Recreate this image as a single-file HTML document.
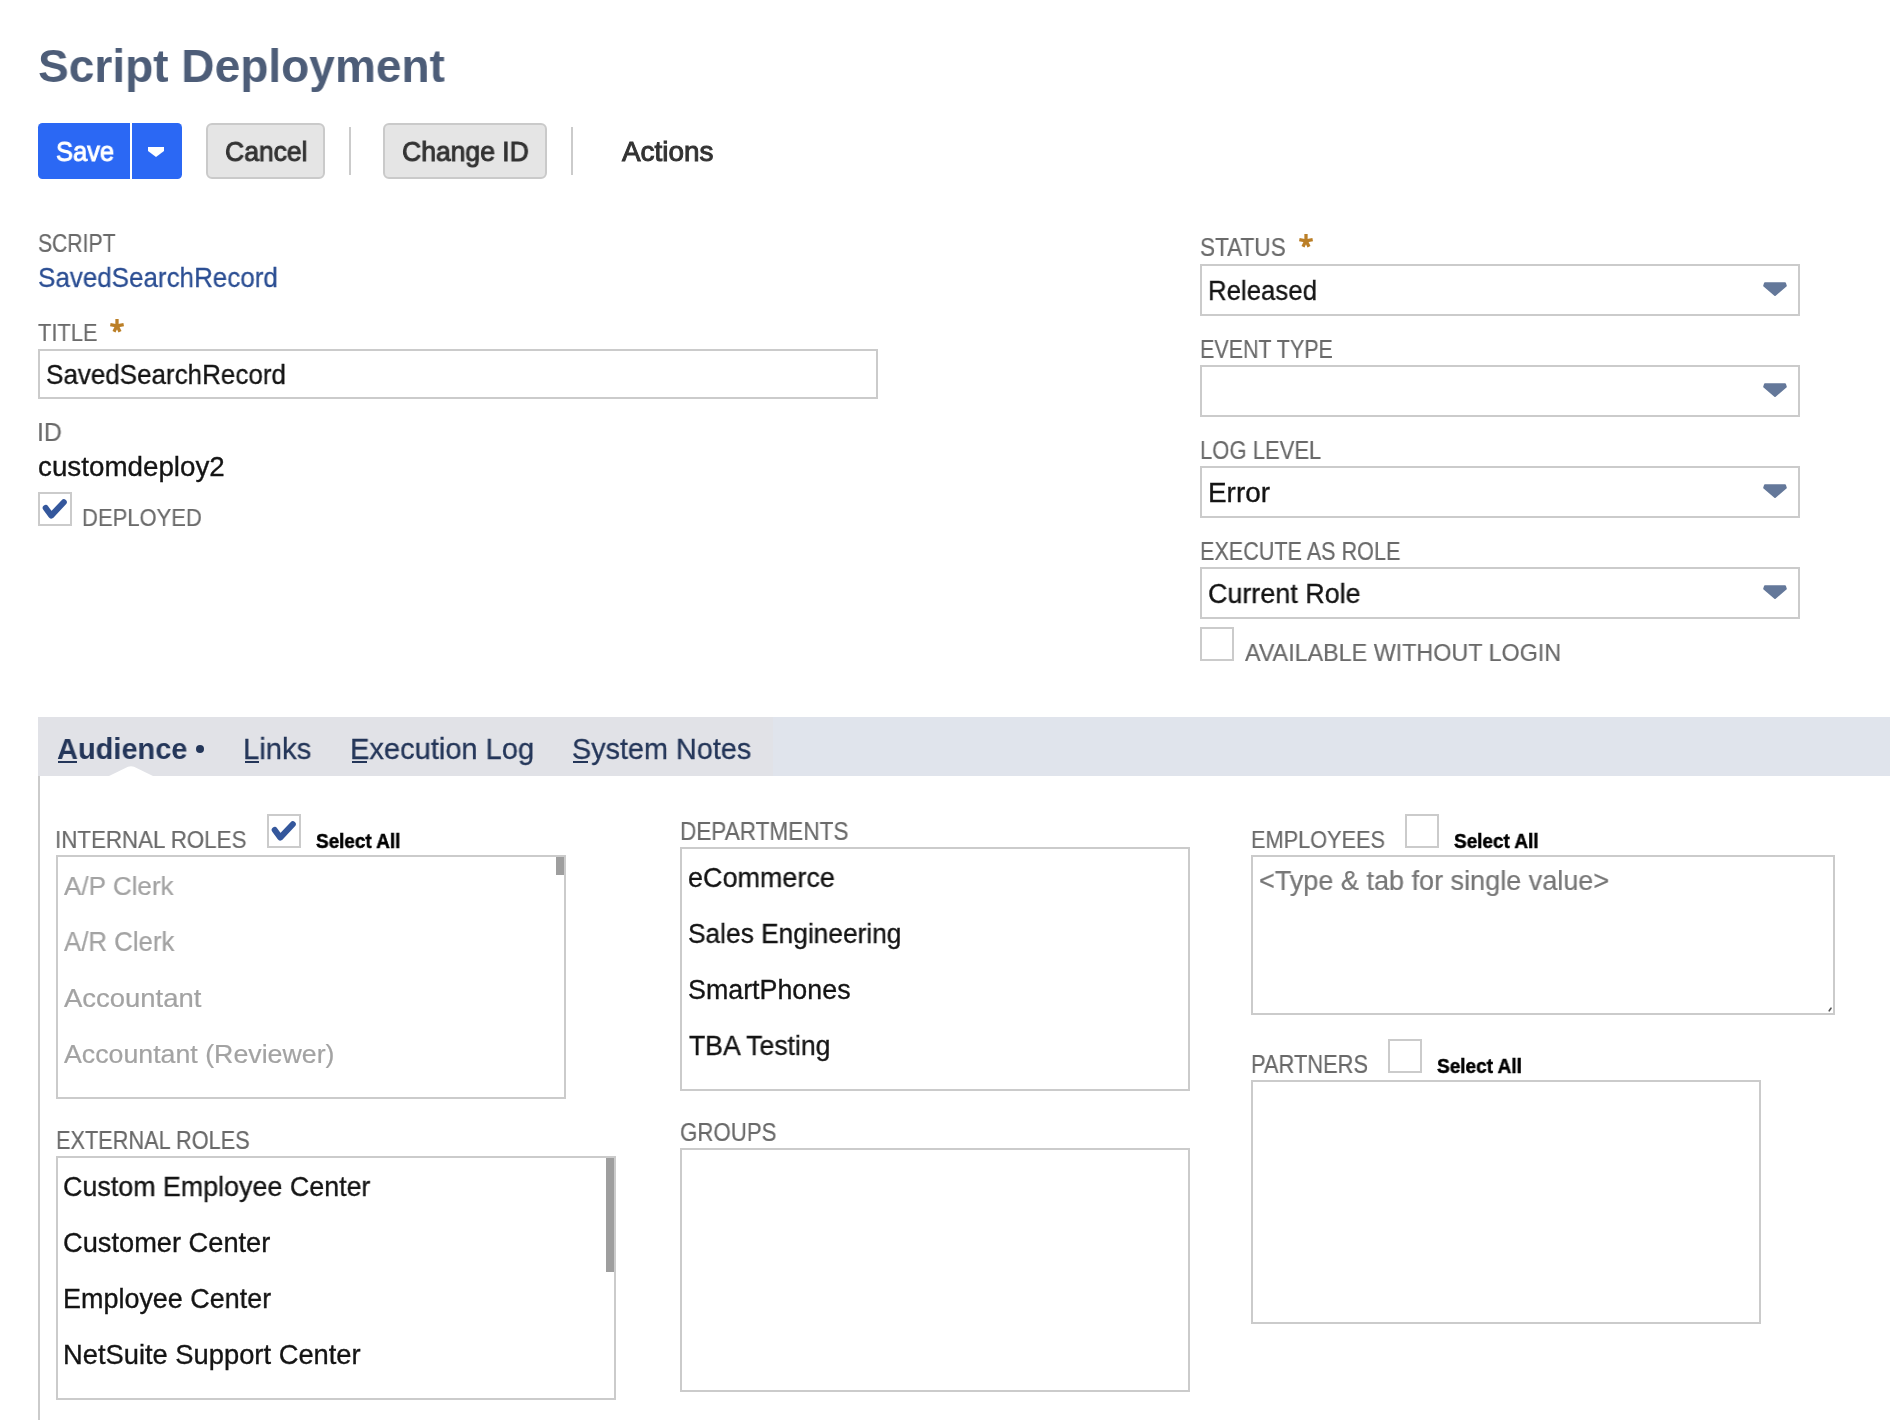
<!DOCTYPE html>
<html><head><meta charset="utf-8"><title>Script Deployment</title>
<style>
html,body{margin:0;padding:0;background:#fff;width:1890px;height:1420px;overflow:hidden;position:relative;font-family:"Liberation Sans",sans-serif}
.t{position:absolute;line-height:0;white-space:pre;transform-origin:0 0;will-change:transform}
.b{position:absolute;box-sizing:border-box}
.box{position:absolute;box-sizing:border-box;border:2px solid #cbcbcb;background:#fff}
.cb{position:absolute;box-sizing:border-box;border:2px solid #cbcbcb;background:#fff;width:34px;height:34px}
.sep{position:absolute;width:2px;background:#cbcbcb}
.arr{position:absolute;width:24px;height:15px}
</style></head><body>
<!-- buttons -->
<div class="b" style="left:38px;top:123px;width:144px;height:56px;background:#2b68f4;border-radius:4.5px"></div>
<div class="b" style="left:130px;top:123px;width:2px;height:56px;background:#fff"></div>
<svg class="b" style="left:147px;top:146px" width="18" height="12" viewBox="0 0 18 12"><path d="M1 1 H17 V5 L9 11 L1 5 Z" fill="#fff"/></svg>
<div class="b" style="left:206px;top:123px;width:119px;height:56px;background:#e5e5e5;border:2px solid #cacaca;border-radius:6px"></div>
<div class="sep" style="left:349px;top:127px;height:48px"></div>
<div class="b" style="left:383px;top:123px;width:164px;height:56px;background:#e5e5e5;border:2px solid #cacaca;border-radius:6px"></div>
<div class="sep" style="left:571px;top:127px;height:48px"></div>

<!-- asterisks -->
<svg class="b" style="left:109px;top:318px" width="16" height="16" viewBox="0 0 16 16"><g stroke="#bb7f27" stroke-width="3.3" stroke-linecap="butt"><line x1="8" y1="1" x2="8" y2="8"/><line x1="1.3" y1="6.6" x2="8" y2="7.8"/><line x1="14.7" y1="6.6" x2="8" y2="7.8"/><line x1="5" y1="13.8" x2="8" y2="7.5"/><line x1="11" y1="13.8" x2="8" y2="7.5"/></g></svg>
<svg class="b" style="left:1298px;top:233px" width="16" height="16" viewBox="0 0 16 16"><g stroke="#bb7f27" stroke-width="3.3" stroke-linecap="butt"><line x1="8" y1="1" x2="8" y2="8"/><line x1="1.3" y1="6.6" x2="8" y2="7.8"/><line x1="14.7" y1="6.6" x2="8" y2="7.8"/><line x1="5" y1="13.8" x2="8" y2="7.5"/><line x1="11" y1="13.8" x2="8" y2="7.5"/></g></svg>

<!-- title input -->
<div class="box" style="left:38px;top:349px;width:840px;height:50px"></div>
<!-- deployed checkbox -->
<div class="cb" style="left:38px;top:492px"></div>
<svg class="b" style="left:38px;top:492px" width="34" height="34" viewBox="0 0 34 34"><path d="M7.7 16 L13.2 23.6 L25.8 10.2" fill="none" stroke="#34579c" stroke-width="6" stroke-linejoin="round" stroke-linecap="round"/></svg>

<!-- selects -->
<div class="box" style="left:1200px;top:264px;width:600px;height:52px"></div>
<div class="box" style="left:1200px;top:365px;width:600px;height:52px"></div>
<div class="box" style="left:1200px;top:466px;width:600px;height:52px"></div>
<div class="box" style="left:1200px;top:567px;width:600px;height:52px"></div>
<svg class="arr" style="left:1763px;top:282px" viewBox="0 0 24 15"><path d="M2 1.2 H22 L22.8 3.8 L12 13 L1.2 3.8 Z" fill="#64789a" stroke="#64789a" stroke-width="2" stroke-linejoin="round"/></svg>
<svg class="arr" style="left:1763px;top:383px" viewBox="0 0 24 15"><path d="M2 1.2 H22 L22.8 3.8 L12 13 L1.2 3.8 Z" fill="#64789a" stroke="#64789a" stroke-width="2" stroke-linejoin="round"/></svg>
<svg class="arr" style="left:1763px;top:484px" viewBox="0 0 24 15"><path d="M2 1.2 H22 L22.8 3.8 L12 13 L1.2 3.8 Z" fill="#64789a" stroke="#64789a" stroke-width="2" stroke-linejoin="round"/></svg>
<svg class="arr" style="left:1763px;top:585px" viewBox="0 0 24 15"><path d="M2 1.2 H22 L22.8 3.8 L12 13 L1.2 3.8 Z" fill="#64789a" stroke="#64789a" stroke-width="2" stroke-linejoin="round"/></svg>
<div class="cb" style="left:1200px;top:627px"></div>

<!-- tab bar -->
<div class="b" style="left:38px;top:717px;width:1852px;height:59px;background:#e0e4ec"></div>
<div class="b" style="left:38px;top:717px;width:735px;height:59px;background:#e1e2e7"></div>
<svg class="b" style="left:106px;top:764px;filter:blur(0.5px)" width="50" height="13" viewBox="0 0 50 13"><path d="M2 12.5 L22 2.8 Q25 1.5 28 2.8 L48 12.5 Z" fill="#fff"/></svg>
<div class="b" style="left:38px;top:776px;width:2px;height:644px;background:#cbcbcb"></div>
<div class="b" style="left:58px;top:760.5px;width:19px;height:2.5px;background:#243659"></div>
<div class="b" style="left:244.5px;top:760.5px;width:14px;height:2.5px;background:#243659"></div>
<div class="b" style="left:351.5px;top:760.5px;width:15px;height:2.5px;background:#243659"></div>
<div class="b" style="left:573px;top:760.5px;width:15px;height:2.5px;background:#243659"></div>
<div class="b" style="left:196px;top:744.5px;width:8px;height:8px;border-radius:50%;background:#243659"></div>

<!-- internal roles -->
<div class="cb" style="left:267px;top:814px"></div>
<svg class="b" style="left:267px;top:814px" width="34" height="34" viewBox="0 0 34 34"><path d="M7.7 16 L13.2 23.6 L25.8 10.2" fill="none" stroke="#34579c" stroke-width="6" stroke-linejoin="round" stroke-linecap="round"/></svg>
<div class="box" style="left:56px;top:855px;width:510px;height:244px"></div>
<div class="b" style="left:556px;top:857px;width:8px;height:18px;background:#9e9e9e"></div>
<!-- external roles -->
<div class="box" style="left:56px;top:1156px;width:560px;height:244px"></div>
<div class="b" style="left:606px;top:1158px;width:8px;height:114px;background:#9e9e9e"></div>
<!-- departments / groups -->
<div class="box" style="left:680px;top:847px;width:510px;height:244px"></div>
<div class="box" style="left:680px;top:1148px;width:510px;height:244px"></div>
<!-- employees / partners -->
<div class="cb" style="left:1405px;top:814px"></div>
<div class="box" style="left:1251px;top:855px;width:584px;height:160px"></div>
<svg class="b" style="left:1825px;top:1004px" width="8" height="8" viewBox="0 0 8 8"><path d="M6 4.2 L4.2 6.8" stroke="#555" stroke-width="1.6" stroke-linecap="round"/></svg>
<div class="cb" style="left:1388px;top:1039px"></div>
<div class="box" style="left:1251px;top:1080px;width:510px;height:244px"></div>

<div class="t" style="left:38.12px;top:66px;font-size:46.81px;font-weight:700;color:#4d5d78;transform:scaleX(0.9843)">Script Deployment</div>
<div class="t" style="left:55.74px;top:152px;font-size:27.97px;font-weight:400;-webkit-text-stroke:0.035em #ffffff;color:#ffffff;transform:scaleX(0.9099)">Save</div>
<div class="t" style="left:224.90px;top:152px;font-size:27.54px;font-weight:400;-webkit-text-stroke:0.035em #333333;color:#333333;transform:scaleX(0.9624)">Cancel</div>
<div class="t" style="left:402.00px;top:152px;font-size:27.54px;font-weight:400;-webkit-text-stroke:0.035em #333333;color:#333333;transform:scaleX(0.9633)">Change ID</div>
<div class="t" style="left:621.96px;top:152px;font-size:27.54px;font-weight:400;-webkit-text-stroke:0.035em #333333;color:#333333;transform:scaleX(1.0131)">Actions</div>
<div class="t" style="left:38.05px;top:243px;font-size:24.93px;font-weight:400;-webkit-text-stroke:0.008em #6a6a6a;color:#6a6a6a;transform:scaleX(0.8490)">SCRIPT</div>
<div class="t" style="left:37.86px;top:278px;font-size:27.97px;font-weight:400;-webkit-text-stroke:0.01em #2b4e93;color:#2b4e93;transform:scaleX(0.9292)">SavedSearchRecord</div>
<div class="t" style="left:37.86px;top:333px;font-size:24.78px;font-weight:400;-webkit-text-stroke:0.008em #6a6a6a;color:#6a6a6a;transform:scaleX(0.8813)">TITLE</div>
<div class="t" style="left:45.86px;top:375px;font-size:27.97px;font-weight:400;-webkit-text-stroke:0.012em #141414;color:#141414;transform:scaleX(0.9296)">SavedSearchRecord</div>
<div class="t" style="left:37.16px;top:432px;font-size:25.65px;font-weight:400;-webkit-text-stroke:0.008em #6a6a6a;color:#6a6a6a;transform:scaleX(0.9723)">ID</div>
<div class="t" style="left:37.79px;top:467px;font-size:27.00px;font-weight:400;-webkit-text-stroke:0.012em #141414;color:#141414;transform:scaleX(1.0286)">customdeploy2</div>
<div class="t" style="left:82.14px;top:518px;font-size:24.78px;font-weight:400;-webkit-text-stroke:0.008em #6a6a6a;color:#6a6a6a;transform:scaleX(0.8882)">DEPLOYED</div>
<div class="t" style="left:1200.10px;top:247px;font-size:25.80px;font-weight:400;-webkit-text-stroke:0.008em #6a6a6a;color:#6a6a6a;transform:scaleX(0.8756)">STATUS</div>
<div class="t" style="left:1208.14px;top:290px;font-size:28.26px;font-weight:400;-webkit-text-stroke:0.012em #141414;color:#141414;transform:scaleX(0.9127)">Released</div>
<div class="t" style="left:1200.18px;top:349px;font-size:25.07px;font-weight:400;-webkit-text-stroke:0.008em #6a6a6a;color:#6a6a6a;transform:scaleX(0.8568)">EVENT TYPE</div>
<div class="t" style="left:1200.24px;top:450px;font-size:25.80px;font-weight:400;-webkit-text-stroke:0.008em #6a6a6a;color:#6a6a6a;transform:scaleX(0.8544)">LOG LEVEL</div>
<div class="t" style="left:1207.97px;top:493px;font-size:26.96px;font-weight:400;-webkit-text-stroke:0.012em #141414;color:#141414;transform:scaleX(1.0345)">Error</div>
<div class="t" style="left:1199.87px;top:551px;font-size:26.09px;font-weight:400;-webkit-text-stroke:0.008em #6a6a6a;color:#6a6a6a;transform:scaleX(0.8278)">EXECUTE AS ROLE</div>
<div class="t" style="left:1208.25px;top:594px;font-size:27.39px;font-weight:400;-webkit-text-stroke:0.012em #141414;color:#141414;transform:scaleX(0.9827)">Current Role</div>
<div class="t" style="left:1244.50px;top:653px;font-size:24.78px;font-weight:400;-webkit-text-stroke:0.008em #6a6a6a;color:#6a6a6a;transform:scaleX(0.9414)">AVAILABLE WITHOUT LOGIN</div>
<div class="t" style="left:57.43px;top:749px;font-size:30.00px;font-weight:700;color:#243659;transform:scaleX(0.9662)">Audience</div>
<div class="t" style="left:242.66px;top:749px;font-size:30.00px;font-weight:400;-webkit-text-stroke:0.01em #243659;color:#243659;transform:scaleX(0.9760)">Links</div>
<div class="t" style="left:349.58px;top:749px;font-size:30.00px;font-weight:400;-webkit-text-stroke:0.01em #243659;color:#243659;transform:scaleX(0.9683)">Execution Log</div>
<div class="t" style="left:572.25px;top:749px;font-size:30.00px;font-weight:400;-webkit-text-stroke:0.01em #243659;color:#243659;transform:scaleX(0.9599)">System Notes</div>
<div class="t" style="left:55.49px;top:840px;font-size:24.78px;font-weight:400;-webkit-text-stroke:0.008em #6a6a6a;color:#6a6a6a;transform:scaleX(0.9012)">INTERNAL ROLES</div>
<div class="t" style="left:315.81px;top:841px;font-size:19.71px;font-weight:700;-webkit-text-stroke:0.025em #000000;color:#000000;transform:scaleX(0.9594)">Select All</div>
<div class="t" style="left:64.00px;top:886px;font-size:26.67px;font-weight:400;-webkit-text-stroke:0.008em #a3a3a3;color:#a3a3a3;transform:scaleX(0.9771)">A/P Clerk</div>
<div class="t" style="left:64.30px;top:942px;font-size:27.25px;font-weight:400;-webkit-text-stroke:0.008em #a3a3a3;color:#a3a3a3;transform:scaleX(0.9459)">A/R Clerk</div>
<div class="t" style="left:64.30px;top:998px;font-size:26.67px;font-weight:400;-webkit-text-stroke:0.008em #a3a3a3;color:#a3a3a3;transform:scaleX(1.0298)">Accountant</div>
<div class="t" style="left:64.30px;top:1054px;font-size:26.50px;font-weight:400;-webkit-text-stroke:0.008em #a3a3a3;color:#a3a3a3;transform:scaleX(1.0090)">Accountant (Reviewer)</div>
<div class="t" style="left:55.66px;top:1140px;font-size:25.51px;font-weight:400;-webkit-text-stroke:0.008em #6a6a6a;color:#6a6a6a;transform:scaleX(0.8523)">EXTERNAL ROLES</div>
<div class="t" style="left:63.46px;top:1187px;font-size:26.96px;font-weight:400;-webkit-text-stroke:0.012em #141414;color:#141414;transform:scaleX(0.9960)">Custom Employee Center</div>
<div class="t" style="left:63.44px;top:1243px;font-size:26.96px;font-weight:400;-webkit-text-stroke:0.012em #141414;color:#141414;transform:scaleX(1.0102)">Customer Center</div>
<div class="t" style="left:62.64px;top:1299px;font-size:26.96px;font-weight:400;-webkit-text-stroke:0.012em #141414;color:#141414;transform:scaleX(0.9996)">Employee Center</div>
<div class="t" style="left:62.61px;top:1355px;font-size:26.96px;font-weight:400;-webkit-text-stroke:0.012em #141414;color:#141414;transform:scaleX(1.0136)">NetSuite Support Center</div>
<div class="t" style="left:679.80px;top:831px;font-size:24.93px;font-weight:400;-webkit-text-stroke:0.008em #6a6a6a;color:#6a6a6a;transform:scaleX(0.9051)">DEPARTMENTS</div>
<div class="t" style="left:688.12px;top:878px;font-size:27.10px;font-weight:400;-webkit-text-stroke:0.012em #141414;color:#141414;transform:scaleX(0.9950)">eCommerce</div>
<div class="t" style="left:688.15px;top:934px;font-size:26.81px;font-weight:400;-webkit-text-stroke:0.012em #141414;color:#141414;transform:scaleX(0.9813)">Sales Engineering</div>
<div class="t" style="left:688.13px;top:990px;font-size:26.81px;font-weight:400;-webkit-text-stroke:0.012em #141414;color:#141414;transform:scaleX(1.0012)">SmartPhones</div>
<div class="t" style="left:688.67px;top:1046px;font-size:26.81px;font-weight:400;-webkit-text-stroke:0.012em #141414;color:#141414;transform:scaleX(0.9929)">TBA Testing</div>
<div class="t" style="left:679.89px;top:1132px;font-size:25.65px;font-weight:400;-webkit-text-stroke:0.008em #6a6a6a;color:#6a6a6a;transform:scaleX(0.8679)">GROUPS</div>
<div class="t" style="left:1250.76px;top:840px;font-size:24.78px;font-weight:400;-webkit-text-stroke:0.008em #6a6a6a;color:#6a6a6a;transform:scaleX(0.8770)">EMPLOYEES</div>
<div class="t" style="left:1453.91px;top:841px;font-size:19.71px;font-weight:700;-webkit-text-stroke:0.025em #000000;color:#000000;transform:scaleX(0.9617)">Select All</div>
<div class="t" style="left:1258.75px;top:881px;font-size:27.68px;font-weight:400;-webkit-text-stroke:0.008em #777777;color:#777777;transform:scaleX(0.9770)">&lt;Type &amp; tab for single value&gt;</div>
<div class="t" style="left:1250.95px;top:1064px;font-size:25.80px;font-weight:400;-webkit-text-stroke:0.008em #6a6a6a;color:#6a6a6a;transform:scaleX(0.8472)">PARTNERS</div>
<div class="t" style="left:1437.11px;top:1066px;font-size:19.71px;font-weight:700;-webkit-text-stroke:0.025em #000000;color:#000000;transform:scaleX(0.9651)">Select All</div>
</body></html>
